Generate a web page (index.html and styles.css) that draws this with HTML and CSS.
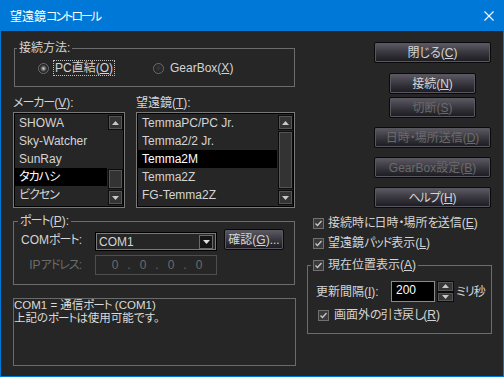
FILE: index.html
```html
<!DOCTYPE html>
<html lang="ja">
<head>
<meta charset="utf-8">
<title>望遠鏡コントロール</title>
<link rel="stylesheet" href="styles.css">
</head>
<body>
<div class="win">
  <div class="titlebar">
    <span class="title">望遠鏡<span class="kn2">コントロール</span></span>
    <svg class="close" width="10" height="10" viewBox="0 0 10 10"><path d="M0.5 0.5L9.5 9.5M9.5 0.5L0.5 9.5" stroke="#fff" stroke-width="1.1" fill="none"/></svg>
  </div>
  <div class="client">
    <div class="leftcol">
      <fieldset class="group conn">
        <legend>接続方法:</legend>
        <div class="radios">
          <span class="radio-item first"><span class="radio checked"></span><span class="focus">PC直結(<u>O</u>)</span></span>
          <span class="radio-item"><span class="radio"></span><span class="rlabel">GearBox(<u>X</u>)</span></span>
        </div>
      </fieldset>

      <div class="lists">
        <div class="listcol maker">
          <div class="lbl"><span class="kn">メーカー</span>(<u>V</u>):</div>
          <div class="listbox">
            <div class="items">
              <div class="item">SHOWA</div>
              <div class="item">Sky-Watcher</div>
              <div class="item">SunRay</div>
              <div class="item sel"><span class="kn">タカハシ</span></div>
              <div class="item"><span class="kn">ビクセン</span></div>
            </div>
            <div class="sbar">
              <div class="sbtn"><svg width="7" height="4" viewBox="0 0 7 4"><path d="M3.5 0L7 4H0Z" fill="#c8c8c8"/></svg></div>
              <div class="track"><div class="thumb"></div></div>
              <div class="sbtn"><svg width="7" height="4" viewBox="0 0 7 4"><path d="M0 0H7L3.5 4Z" fill="#c8c8c8"/></svg></div>
            </div>
          </div>
        </div>
        <div class="listcol scope">
          <div class="lbl">望遠鏡(<u>T</u>):</div>
          <div class="listbox">
            <div class="items">
              <div class="item">TemmaPC/PC Jr.</div>
              <div class="item">Temma2/2 Jr.</div>
              <div class="item sel">Temma2M</div>
              <div class="item">Temma2Z</div>
              <div class="item">FG-Temma2Z</div>
            </div>
            <div class="sbar">
              <div class="sbtn"><svg width="7" height="4" viewBox="0 0 7 4"><path d="M3.5 0L7 4H0Z" fill="#c8c8c8"/></svg></div>
              <div class="track full"><div class="thumb"></div></div>
              <div class="sbtn"><svg width="7" height="4" viewBox="0 0 7 4"><path d="M0 0H7L3.5 4Z" fill="#c8c8c8"/></svg></div>
            </div>
          </div>
        </div>
      </div>

      <fieldset class="group port">
        <legend><span class="kn">ポート</span>(<u>P</u>):</legend>
        <div class="prow first">
          <span class="plabel">COM<span class="kn">ポート</span>:</span>
          <div class="combo">
            <span class="ctext">COM1</span>
            <span class="cbtn"><svg width="7" height="4" viewBox="0 0 7 4"><path d="M0 0H7L3.5 4Z" fill="#e0e0e0"/></svg></span>
          </div>
          <div class="btn check">確認(<u>G</u>)...</div>
        </div>
        <div class="prow second">
          <span class="plabel dis">IP<span class="kn">アドレス</span>:</span>
          <div class="ipbox">
            <span class="ip">0</span><span class="ip">.</span><span class="ip">0</span><span class="ip">.</span><span class="ip">0</span><span class="ip">.</span><span class="ip">0</span>
          </div>
        </div>
      </fieldset>

      <div class="info">
        <div class="iline">COM1 = 通信<span class="kn">ポート</span> (COM1)</div>
        <div class="iline">上記の<span class="kn">ポート</span>は使用可能です。</div>
      </div>
    </div>

    <div class="rightcol">
      <div class="btncol">
        <div class="btn wide b1">閉じる(<u>C</u>)</div>
        <div class="btn narrow b2">接続(<u>N</u>)</div>
        <div class="btn narrow dis b3">切断(<u>S</u>)</div>
        <div class="btn wide dis b4">日時<span class="kn">・</span>場所送信(<u>D</u>)</div>
        <div class="btn wide dis b5">GearBox設定(<u>B</u>)</div>
        <div class="btn wide b6"><span class="kn">ヘルプ</span>(<u>H</u>)</div>
      </div>

      <div class="crow c1"><span class="cb"><svg width="9" height="9" viewBox="0 0 9 9"><path d="M1.5 4.5L3.5 6.5L7.5 2" stroke="#c8c8c8" stroke-width="1.3" fill="none"/></svg></span>接続時<span class="kn">に</span>日時<span class="kn">・</span>場所<span class="kn">を</span>送信(<u>E</u>)</div>
      <div class="crow c2"><span class="cb"><svg width="9" height="9" viewBox="0 0 9 9"><path d="M1.5 4.5L3.5 6.5L7.5 2" stroke="#c8c8c8" stroke-width="1.3" fill="none"/></svg></span>望遠鏡<span class="kn">パッド</span>表示(<u>L</u>)</div>

      <fieldset class="group pos">
        <legend><span class="cb"><svg width="9" height="9" viewBox="0 0 9 9"><path d="M1.5 4.5L3.5 6.5L7.5 2" stroke="#c8c8c8" stroke-width="1.3" fill="none"/></svg></span>現在位置表示(<u>A</u>)</legend>
        <div class="srow">
          <span class="slabel">更新間隔(<u>I</u>):</span>
          <div class="spin">200</div>
          <div class="spinbtns">
            <div class="spb"><svg width="7" height="4" viewBox="0 0 7 4"><path d="M3.5 0L7 4H0Z" fill="#c8c8c8"/></svg></div>
            <div class="spb"><svg width="7" height="4" viewBox="0 0 7 4"><path d="M0 0H7L3.5 4Z" fill="#c8c8c8"/></svg></div>
          </div>
          <span class="unit"><span class="kn">ミリ</span>秒</span>
        </div>
        <div class="crow c3"><span class="cb"><svg width="9" height="9" viewBox="0 0 9 9"><path d="M1.5 4.5L3.5 6.5L7.5 2" stroke="#c8c8c8" stroke-width="1.3" fill="none"/></svg></span>画面外<span class="kn">の</span>引<span class="kn">き</span>戻<span class="kn">し</span>(<u>R</u>)</div>
      </fieldset>
    </div>
  </div>
</div>
</body>
</html>
```

FILE: styles.css
```css
* { box-sizing: border-box; }
html, body { margin: 0; padding: 0; background: #262626; }
body {
  font: 12px "Liberation Sans", "Noto Sans CJK JP", sans-serif;
  font-feature-settings: "palt";
  color: #d4d4d4;
}
u { text-decoration: underline; text-underline-offset: 1px; }
.kn { letter-spacing: -1px; }
.kn2 { letter-spacing: -2px; }

.win {
  width: 504px;
  height: 377px;
  border: 1px solid #0078d7;
  background: #262626;
  overflow: hidden;
}
.titlebar {
  height: 30px;
  background: #0078d7;
  display: flex;
  align-items: center;
  padding: 0 9px;
}
.title { flex: 1; color: #fff; font-size: 12px; line-height: 14px; padding-top: 1px; }
.close { display: block; }

.client { display: flex; height: 345px; }
.leftcol { margin-left: 12px; width: 283px; padding-top: 10px; }
.rightcol { margin-left: 11px; width: 185px; padding-top: 11px; }

/* group boxes */
.group {
  margin: 0;
  min-width: 0;
  border: 1px solid #6c6c6c;
}
.group legend {
  padding: 0 2px;
  line-height: 14px;
  height: 14px;
  display: flex;
  align-items: center;
}

.conn { margin-left: 1px; width: 281px; padding: 5px 0 10px 2px; }
.radios { display: flex; align-items: center; height: 16px; padding-left: 21px; }
.radio-item { display: flex; align-items: center; }
.radio-item.first { width: 115px; }
.radio {
  width: 11px; height: 11px; border-radius: 50%;
  border: 1px solid #6e6e6e;
  background: radial-gradient(circle at 50% 45%, #3a3a3a, #161616);
  margin-right: 4px;
}
.radio.checked {
  background: radial-gradient(circle at 50% 50%, #d0d0d0 0, #8a8a8a 1.5px, #4a4a4a 2.5px, #222 4px);
}
.radio-item:not(.first) .radio { margin-right: 6px; }
.focus {
  border: 1px dotted #c0c0c0;
  height: 16px;
  line-height: 14px;
  padding: 0 1px;
}
.rlabel { line-height: 14px; }

/* lists */
.lists { display: flex; margin-top: 9px; }
.listcol.maker { width: 112px; }
.listcol.scope { width: 159px; margin-left: 11px; }
.lbl { line-height: 14px; height: 14px; margin-bottom: 2px; }
.listbox {
  height: 96px;
  border: 1px solid #7a7a7a;
  box-shadow: inset 0 0 0 1px #000;
  padding: 1px;
  display: flex;
}
.items { flex: 1; overflow: hidden; }
.item { height: 18px; line-height: 18px; padding-left: 4px; white-space: nowrap; }
.item.sel { background: #000; color: #fff; }
.sbar { width: 16px; display: flex; flex-direction: column; padding: 1px 0 1px 1px; }
.sbtn {
  height: 15px;
  background: #333;
  border: 1px solid #0c0c0c;
  box-shadow: inset 0 0 0 1px #555;
  display: flex; align-items: center; justify-content: center;
}
.sbtn svg { display: block; }
.track { flex: 1; display: flex; flex-direction: column; justify-content: flex-end; }
.thumb {
  height: 20px;
  margin-bottom: 1px;
  background: #333;
  border: 1px solid #0c0c0c;
  box-shadow: inset 0 0 0 1px #555;
}
.track.full .thumb { flex: 1; height: auto; margin: 1px 0; }

/* port */
.port { margin-top: 6px; width: 282px; padding: 1px 0 9px 4px; }
.prow { display: flex; }
.prow.first { height: 22px; }
.prow.second { height: 20px; margin-top: 4px; align-items: center; }
.plabel { width: 64px; text-align: right; align-self: center; line-height: 14px; white-space: nowrap; }
.plabel.dis { color: #6c6c6c; }
.combo {
  margin-left: 13px;
  width: 122px;
  height: 19px;
  align-self: flex-end;
  border: 1px solid #000;
  box-shadow: inset 0 0 0 1px #7a7a7a;
  display: flex;
  align-items: center;
  padding: 0 3px 0 3px;
}
.ctext { flex: 1; line-height: 14px; }
.cbtn {
  width: 14px; height: 14px;
  background: #141414;
  border: 1px solid #6a6a6a;
  display: flex; align-items: center; justify-content: center;
}
.btn.check { margin-left: 7px; width: 60px; align-self: flex-start; }
.ipbox {
  margin-left: 13px;
  width: 122px;
  height: 20px;
  border: 1px solid #4e4e4e;
  display: flex;
  align-items: center;
  padding-left: 12px;
  color: #6c6c6c;
}
.ip { width: 14px; text-align: center; line-height: 14px; }

.info {
  margin-top: 13px;
  width: 283px;
  height: 68px;
  border: 1px solid #6a6a6a;
  color: #dcdcdc;
  white-space: nowrap;
}
.iline { height: 13px; line-height: 13px; font-size: 11.5px; }

/* buttons */
.btn {
  height: 21px;
  display: flex; align-items: center; justify-content: center;
  border: 1px solid #0a0a0a;
  border-radius: 2px;
  background: linear-gradient(#5e5b64, #3c3a42 45%, #1b1a1f);
  box-shadow: inset 0 0 0 1px #58565e;
  color: #d4d4d4;
  white-space: nowrap;
  line-height: 14px;
}
.btn.dis { color: #6a6a6a; }
.btncol { margin-left: 67px; width: 117px; display: flex; flex-direction: column; align-items: center; }
.btn.wide { width: 117px; }
.btn.narrow { width: 87px; }
.b2 { margin-top: 10px; }
.b3 { margin-top: 3px; }
.b4 { margin-top: 9px; }
.b5 { margin-top: 9px; }
.b6 { margin-top: 9px; }

/* checkboxes */
.crow { display: flex; align-items: center; height: 14px; line-height: 14px; white-space: nowrap; }
.crow.c1 { margin-top: 8px; margin-left: 6px; }
.crow.c2 { margin-top: 6px; margin-left: 6px; }
.cb {
  width: 11px; height: 11px;
  border: 1px solid #707070;
  background: #3a3a3a;
  margin-right: 4px;
  display: flex; align-items: center; justify-content: center;
  flex: none;
}
.cb svg { display: block; }

.pos { margin-top: 8px; width: 185px; padding: 9px 0 11px 3px; }
.srow { display: flex; align-items: center; height: 21px; }
.slabel { margin-left: 5px; width: 75px; line-height: 14px; }
.spin {
  width: 44px; height: 21px;
  background: #000;
  border: 1px solid #8a8a8a;
  color: #fff;
  padding-left: 4px;
  line-height: 16px;
}
.spinbtns { margin-left: 2px; width: 17px; height: 21px; display: flex; flex-direction: column; }
.spb {
  flex: 1;
  background: #363636;
  border: 1px solid #0c0c0c;
  box-shadow: inset 0 0 0 1px #555;
  display: flex; align-items: center; justify-content: center;
}
.spb svg { display: block; }
.unit { margin-left: 2px; line-height: 14px; }
.crow.c3 { margin-top: 6px; margin-left: 7px; }
.crow.c3 .cb { margin-right: 5px; }
```
